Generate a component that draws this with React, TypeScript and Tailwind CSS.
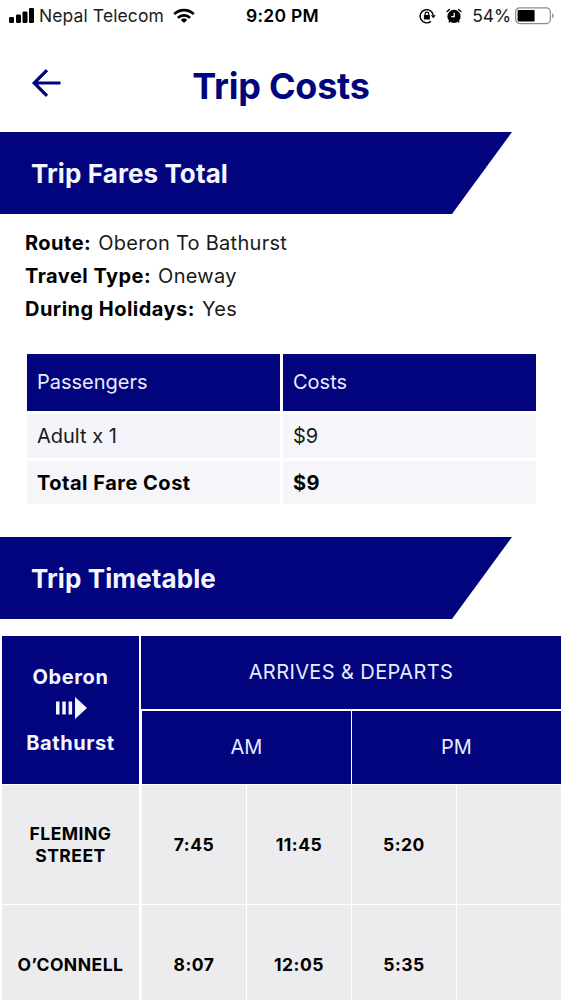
import React from 'react';

interface Stop {
  name: string;
  times: string[];
}

interface BannerProps {
  title: string;
}

interface InfoRowProps {
  label: string;
  value: string;
}

const stops: Stop[] = [
  { name: 'Fleming Street', times: ['7:45', '11:45', '5:20', ''] },
  { name: 'O’Connell', times: ['8:07', '12:05', '5:35', ''] },
];

const StatusBar: React.FC = () => (
  <div className="grid h-8 grid-cols-[1fr_auto_1fr] items-center px-[9px] text-[17.5px] leading-8">
    <div className="flex items-center">
      <svg width="26" height="16" viewBox="0 0 26 16" className="shrink-0">
        <rect x="0" y="9" width="5" height="6" rx="1.3" />
        <rect x="7" y="6.5" width="5" height="8.5" rx="1.3" />
        <rect x="13.5" y="3.5" width="5" height="11.5" rx="1.3" />
        <rect x="20" y="0" width="5" height="15" rx="1.3" />
      </svg>
      <span className="ml-[4px] whitespace-nowrap tracking-[0.1px] text-[#1c1c1c]">Nepal Telecom</span>
      <svg width="22" height="16" viewBox="0 0 22 16" className="ml-[9px] shrink-0" fill="none" stroke="#000" strokeWidth="2.7">
        <path d="M1.2 6.1A14 14 0 0 1 20.8 6.1" />
        <path d="M4.9 9.9A8.7 8.7 0 0 1 17.1 9.9" />
        <path d="M11 15 7.7 11.8A4.8 4.8 0 0 1 14.3 11.8Z" fill="#000" stroke="none" />
      </svg>
    </div>
    <span className="whitespace-nowrap pl-[2px] font-semibold tracking-[0.3px]">9:20 PM</span>
    <div className="flex items-center justify-end">
      <svg width="18" height="16" viewBox="0 0 18 16" className="shrink-0">
        <path d="M11.9 13.4A6.6 6.6 0 1 1 14.3 7.2" fill="none" stroke="#000" strokeWidth="1.4" />
        <path d="M11.8 7.2h5l-2.5 3z" />
        <rect x="4.9" y="7" width="6" height="4.6" rx="0.6" />
        <path d="M6.1 7V5.9a1.8 1.8 0 0 1 3.6 0V7" fill="none" stroke="#000" strokeWidth="1.2" />
      </svg>
      <svg width="16" height="16" viewBox="0 0 16 16" className="ml-[9px] shrink-0">
        <circle cx="8" cy="8.4" r="6.6" />
        <path d="M3.8 13l-.9 1.4M12.2 13l.9 1.4" stroke="#000" strokeWidth="1.4" />
        <path d="M1.1 3.5 3.4 1.5M12.6 1.5l2.3 2" stroke="#000" strokeWidth="1.4" strokeLinecap="round" />
        <path d="M8.2 4.7v3.9H5.2" fill="none" stroke="#fff" strokeWidth="1.3" />
      </svg>
      <span className="ml-[10px] tracking-[-0.1px] text-[#1c1c1c]">54%</span>
      <svg width="40" height="18" viewBox="0 0 40 18" className="-mr-px ml-[4px] shrink-0">
        <rect x="0.7" y="0.8" width="34.6" height="15.8" rx="4" fill="none" stroke="#8a8a8a" strokeWidth="1.2" />
        <rect x="2.6" y="3" width="17" height="11.4" rx="1" />
        <path d="M37.2 6.2c2 .8 2 4.2 0 5z" fill="#8a8a8a" />
      </svg>
    </div>
  </div>
);

const Banner: React.FC<BannerProps> = ({ title }) => (
  <div className="flex h-[82px] w-[512px] items-center bg-[#02047e] pl-[31px] pt-[2px] [clip-path:polygon(0_0,100%_0,452px_100%,0_100%)]">
    <h2 className="text-[26px] font-bold leading-none tracking-[0.1px] text-[#f4f6ff]">{title}</h2>
  </div>
);

const InfoRow: React.FC<InfoRowProps> = ({ label, value }) => (
  <p className="text-[20px] leading-[33px] tracking-[0.28px] text-[#1a1a1a]">
    <strong className="mr-px font-bold tracking-[0.48px] text-black">{label}:</strong> {value}
  </p>
);

export default function App() {
  return (
    <div className="h-[1000px] w-[563px] overflow-hidden bg-white font-['Inter',sans-serif] text-black">
      <StatusBar />

      {/* Header */}
      <header className="grid h-[100px] grid-cols-[100px_1fr_100px] items-center text-[#02047e]">
        <button className="ml-[31px] mt-[2px] w-[32px]" aria-label="Back">
          <svg width="31" height="28" viewBox="0 0 31 28" fill="none" stroke="currentColor" strokeWidth="3.2" className="block">
            <path d="M16 1.2 3.2 14 16 26.8M2.2 14H29.5" />
          </svg>
        </button>
        <h1 className="mt-[8px] pr-px text-center text-[36px] font-bold leading-none tracking-[-0.25px]">Trip Costs</h1>
      </header>

      <Banner title="Trip Fares Total" />

      <section className="h-[323px] pl-[25px] pt-[13px]">
        <InfoRow label="Route" value="Oberon To Bathurst" />
        <InfoRow label="Travel Type" value="Oneway" />
        <InfoRow label="During Holidays" value="Yes" />

        {/* Fares */}
        <div className="ml-[2px] mt-[28px] grid w-[509px] grid-cols-2 grid-rows-[57px_44px_43px] gap-x-[3px] gap-y-[3px] text-[20px] [&>div]:flex [&>div]:items-center [&>div]:pl-[10px]">
          <div className="bg-[#02047e] pb-px text-[#e8ecff]">Passengers</div>
          <div className="bg-[#02047e] pb-px text-[#e8ecff]">Costs</div>
          <div className="bg-[#f4f5fb] text-[#1a1a1a]">Adult x 1</div>
          <div className="bg-[#f5f5fa] text-[#1a1a1a]">$9</div>
          <div className="bg-[#f5f5fa] font-bold tracking-[0.5px]">Total Fare Cost</div>
          <div className="bg-[#f5f5fa] font-bold tracking-[0.5px]">$9</div>
        </div>
      </section>

      <Banner title="Trip Timetable" />

      {/* Timetable */}
      <section className="ml-[2px] mt-[17px] w-[559px]">
        <div className="flex h-[148px] gap-[2px] text-[20px] text-[#e8ecff]">
          <div className="flex w-[137px] flex-col items-center justify-center bg-[#02047e] font-bold leading-[33px] tracking-[0.6px] text-[#f4f6ff]">
            <span>Oberon</span>
            <span className="flex h-[33px] items-center pb-[4px] pl-[2px]">
              <svg width="31" height="22" viewBox="0 0 31 22" fill="currentColor">
                <path d="M0 4.5h3.5v13H0zM6.3 4.5h3.5v13H6.3zM12.6 4.5h3.5v13h-3.5zM19 0l12 11-12 11z" />
              </svg>
            </span>
            <span>Bathurst</span>
          </div>
          <div className="flex flex-1 flex-col gap-[2px]">
            <div className="flex h-[73px] items-center justify-center bg-[#02047e] pb-[2px] tracking-[0.4px]">ARRIVES &amp; DEPARTS</div>
            <div className="ml-px grid flex-1 grid-cols-2 gap-px">
              <div className="flex items-center justify-center bg-[#02047e] pb-[2px]">AM</div>
              <div className="flex items-center justify-center bg-[#02047e] pb-[2px]">PM</div>
            </div>
          </div>
        </div>
        {stops.map((stop) => (
          <div key={stop.name} className="mt-px flex h-[119px] gap-[3px] text-[17.5px] font-bold tracking-[0.5px]">
            <div className="flex w-[137px] items-center justify-center bg-[#ecebed] text-center uppercase leading-[22px]">
              <span className="w-[110px]">{stop.name}</span>
            </div>
            <div className="grid flex-1 grid-cols-4 gap-px">
              {stop.times.map((time, i) => (
                <div key={i} className="flex items-center justify-center bg-[#ecebed] pt-px">{time}</div>
              ))}
            </div>
          </div>
        ))}
      </section>
    </div>
  );
}
